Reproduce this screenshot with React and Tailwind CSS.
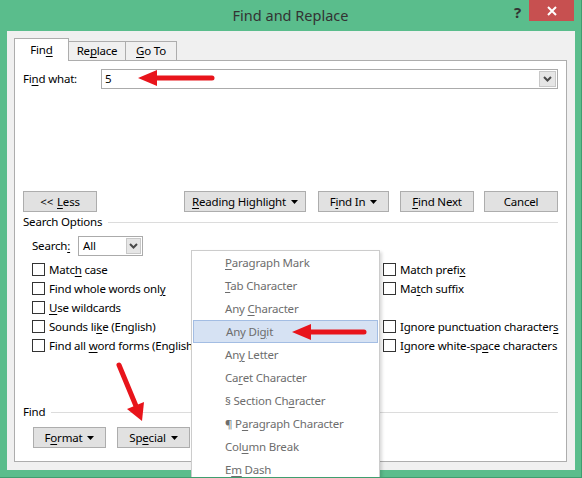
import React from 'react';

const U = ({ children }) => <span className="underline underline-offset-[2px]">{children}</span>;

const Caret = () => (
    <svg width="7" height="4" viewBox="0 0 7 4" className="ml-[5px]">
        <path d="M0 0h7L3.5 4z" fill="#000" />
    </svg>
);

const Chevron = () => (
    <svg width="9" height="6" viewBox="0 0 9 6">
        <path d="M1 1l3.5 3.5L8 1" fill="none" stroke="#4a4a4a" strokeWidth="2" />
    </svg>
);

const Btn = ({ className = '', children }) => (
    <div className={`h-[21px] flex items-center justify-center border border-[#ADADAD] bg-[#E1E1E1] ${className}`}>
        {children}
    </div>
);

const Check = ({ children }) => (
    <div className="h-[19px] flex items-center">
        <div className="w-[13px] h-[13px] border border-[#333] bg-white shrink-0" />
        <span className="ml-[4px] whitespace-nowrap">{children}</span>
    </div>
);

const Label = ({ children, className = '' }) => (
    <div className={`h-[16px] flex items-center ${className}`}>
        <span className="whitespace-nowrap">{children}</span>
        <div className="flex-1 h-px bg-[#DCDCDC] ml-[6px]" />
    </div>
);

const menuItems = [
    [<U key="p">P</U>, 'aragraph Mark'],
    [<U key="t">T</U>, 'ab Character'],
    ['Any ', <U key="c">C</U>, 'haracter'],
    ['Any Di', <U key="g">g</U>, 'it'],
    ['An', <U key="y">y</U>, ' Letter'],
    ['Ca', <U key="r">r</U>, 'et Character'],
    ['§ Section Ch', <U key="a">a</U>, 'racter'],
    ['¶ P', <U key="a2">a</U>, 'ragraph Character'],
    ['Col', <U key="u">u</U>, 'mn Break'],
    ['E', <U key="m">m</U>, ' Dash'],
];

export default function App() {
    return (
        <div className="relative w-[582px] h-[478px] overflow-hidden bg-[#5ABD8C] border-r border-b border-[#3F9E6F] flex flex-col text-[11.5px] tracking-[-0.2px] text-black font-['Segoe_UI','Noto_Sans',sans-serif]">
            {/* title bar */}
            <div className="h-[31px] flex shrink-0">
                <div className="w-[75px]" />
                <div className="flex-1 flex items-center justify-center text-[14.5px] tracking-normal text-[#333]">Find and Replace</div>
                <div className="w-[75px] flex items-start">
                    <div className="w-[23px] h-[24px] flex items-center justify-center font-bold text-[15px] text-[#333]">?</div>
                    <div className="w-[45px] h-[21px] bg-[#C75050] flex items-center justify-center">
                        <svg width="10" height="10" viewBox="0 0 10 10">
                            <path d="M1 1l8 8M9 1l-8 8" stroke="#fff" strokeWidth="2" />
                        </svg>
                    </div>
                </div>
            </div>

            {/* client */}
            <div className="flex-1 ml-[7px] mr-[6px] mb-[7px] bg-[#F0F0F0] pt-[7px] pl-[7px] pr-[8px] pb-[8px] flex flex-col">
                <div className="h-[22px] flex items-end shrink-0">
                    <div className="relative z-10 w-[55px] h-[23px] -mb-px bg-white border border-b-0 border-[#ADADAD] flex items-center justify-center">
                        Fin<U>d</U>
                    </div>
                    <div className="w-[57px] h-[19px] border border-b-0 border-l-0 border-[#ADADAD] bg-[#F0F0F0] flex items-center justify-center">
                        Re<U>p</U>lace
                    </div>
                    <div className="w-[51px] h-[19px] border border-b-0 border-l-0 border-[#ADADAD] bg-[#F0F0F0] flex items-center justify-center">
                        <U>G</U>o To
                    </div>
                </div>

                <div className="flex-1 bg-white border border-[#ADADAD] px-[8px] flex flex-col">
                    <div className="mt-[8px] h-[20px] flex items-center">
                        <div className="w-[78px]">Fi<U>n</U>d what:</div>
                        <div className="flex-1 h-[20px] border border-[#ABABAB] flex">
                            <div className="flex-1 pl-[3px] flex items-center">5</div>
                            <div className="w-[17px] m-px bg-[#E6E6E6] border border-[#C8C8C8] flex items-center justify-center">
                                <Chevron />
                            </div>
                        </div>
                    </div>

                    <div className="mt-[102px] flex">
                        <Btn className="w-[74px]">&lt;&lt; <span className="ml-[4px]"><U>L</U>ess</span></Btn>
                        <div className="flex-1" />
                        <Btn className="w-[122px]"><U>R</U>eading Highlight<Caret /></Btn>
                        <Btn className="w-[71px] ml-[12px]">F<U>i</U>nd In<Caret /></Btn>
                        <Btn className="w-[74px] ml-[11px]"><U>F</U>ind Next</Btn>
                        <Btn className="w-[74px] ml-[10px]">Cancel</Btn>
                    </div>

                    <Label className="mt-[2px]">Search Options</Label>

                    <div className="mt-[6px] ml-[9px] h-[19px] flex items-center">
                        <span className="w-[46px]">Search<U>:</U></span>
                        <div className="w-[65px] h-[20px] border border-[#ABABAB] flex">
                            <div className="flex-1 pl-[4px] flex items-center">All</div>
                            <div className="w-[15px] m-px bg-[#E6E6E6] border border-[#C8C8C8] flex items-center justify-center">
                                <Chevron />
                            </div>
                        </div>
                    </div>

                    <div className="mt-[5px] ml-[9px] grid grid-cols-[351px_1fr]">
                        <div className="flex flex-col">
                            <Check>Matc<U>h</U> case</Check>
                            <Check>Find whole words onl<U>y</U></Check>
                            <Check><U>U</U>se wildcards</Check>
                            <Check>Sounds li<U>k</U>e (English)</Check>
                            <Check>Find all <U>w</U>ord forms (English)</Check>
                        </div>
                        <div className="flex flex-col">
                            <Check>Match prefi<U>x</U></Check>
                            <Check>Ma<U>t</U>ch suffix</Check>
                            <div className="h-[19px]" />
                            <Check>Ignore punctuation character<U>s</U></Check>
                            <Check>Ignore white-sp<U>a</U>ce characters</Check>
                        </div>
                    </div>

                    <Label className="mt-[49px]">Find</Label>

                    <div className="mt-[7px] ml-[10px] flex">
                        <Btn className="w-[73px]">F<U>o</U>rmat<Caret /></Btn>
                        <Btn className="w-[73px] ml-[11px] bg-[#D9EAF9] border-[#569DE5]">Sp<U>e</U>cial<Caret /></Btn>
                    </div>
                </div>
            </div>

            {/* Special dropdown menu */}
            <div className="absolute left-[191px] top-[250px] w-[189px] bg-white border border-[#CCCCCC] shadow-[2px_2px_3px_rgba(0,0,0,0.15)] text-[#6D6D6D]">
                {menuItems.map((parts, i) => (
                    <div
                        key={i}
                        className={`h-[23px] flex items-center ${i === 3 ? 'mx-px pl-[32px] bg-[#D6E2F3] border border-[#A3BDE3]' : 'pl-[33px]'}`}
                    >
                        <span className="whitespace-nowrap">{parts}</span>
                    </div>
                ))}
            </div>

            {/* red annotation arrows */}
            <svg className="absolute inset-0 pointer-events-none" width="582" height="478" viewBox="0 0 582 478">
                <g fill="#E8141B" stroke="#E8141B">
                    <line x1="212" y1="78" x2="152" y2="78" strokeWidth="5" strokeLinecap="round" />
                    <polygon points="138,78 157,70 157,86" stroke="none" />
                    <line x1="364" y1="332" x2="306" y2="332" strokeWidth="5" strokeLinecap="round" />
                    <polygon points="292,332 311,324 311,340" stroke="none" />
                    <line x1="119" y1="365" x2="136" y2="406" strokeWidth="5" strokeLinecap="round" />
                    <polygon points="142,421 127,409 144,402" stroke="none" />
                </g>
            </svg>
        </div>
    );
}
